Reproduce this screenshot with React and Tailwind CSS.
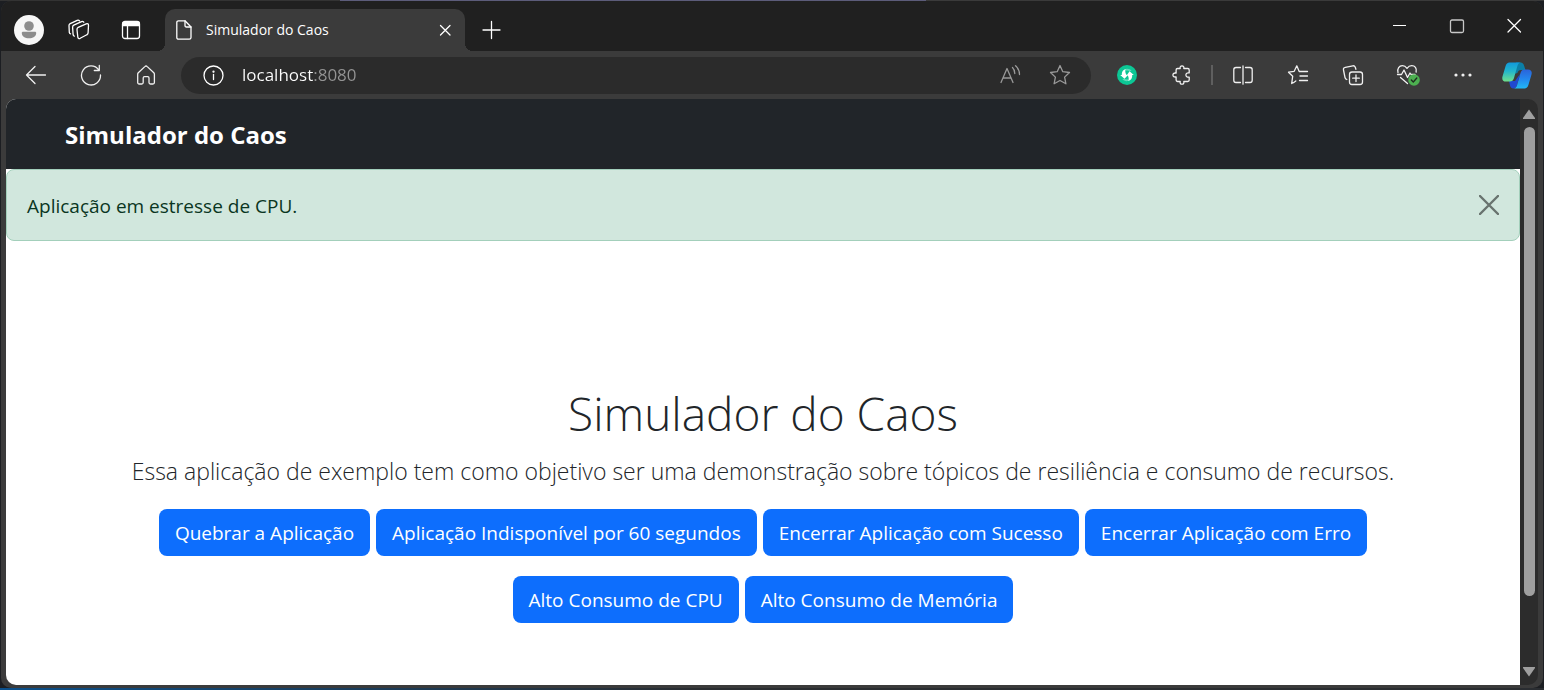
const iconProps = {
  fill: 'none',
  stroke: 'currentColor',
  strokeWidth: 1.3,
  strokeLinecap: 'round',
  strokeLinejoin: 'round',
  'aria-hidden': true,
}

function Icon({ size = 'size-5', box = 20, children }) {
  return (
    <svg viewBox={`0 0 ${box} ${box}`} className={`${size} shrink-0`} {...iconProps}>
      {children}
    </svg>
  )
}

function ToolButton({ label, children }) {
  return (
    <button aria-label={label} className="flex h-full w-[55px] shrink-0 items-center justify-center">
      {children}
    </button>
  )
}

function ProfileIcon() {
  return (
    <svg viewBox="0 0 30 30" className="size-[30px]" aria-hidden="true">
      <circle cx="15" cy="15" r="15" fill="#f7f7f7" />
      <circle cx="15" cy="11" r="4.8" fill="#8d8d8d" />
      <path d="M9.200 16.800h11.600c1 0 1.500.5 1.400 1.500-.3 3.300-3 5-7.200 5s-6.900-1.700-7.200-5c-.1-1 .4-1.500 1.400-1.500z" fill="#8d8d8d" />
    </svg>
  )
}

function CopilotIcon() {
  return (
    <svg viewBox="0 0 30 27" className="h-[27px] w-[30px]" aria-hidden="true">
      <defs>
        <linearGradient id="cp-left" x1="0" y1="0" x2="0" y2="1">
          <stop offset="0" stopColor="#1199dc" />
          <stop offset=".45" stopColor="#22b5cc" />
          <stop offset="1" stopColor="#6fe08c" />
        </linearGradient>
        <linearGradient id="cp-right" x1="0" y1="0" x2="0" y2="1">
          <stop offset="0" stopColor="#2b63d9" />
          <stop offset=".5" stopColor="#2387ee" />
          <stop offset="1" stopColor="#22b8f5" />
        </linearGradient>
      </defs>
      <path d="M14 .500h4.500c2 0 3.200 1.500 3.700 3.500l1.300 4H19c-2 0-3 1-3.600 3L12 12z" fill="#0b7fa8" />
      <path d="M7 19h6l5-7-3 11c-.6 2.300-1.600 3.500-3.500 3.500-2 0-2.900-1-3.500-3z" fill="#2048d0" />
      <path d="M7.500.500H19c-2 0-3 1.200-3.600 3.500L12 16c-.7 2.500-2 3.500-4.200 3.500H4c-3 0-4.300-2-3.500-5L3.600 4C4.300 1.700 5.500.500 7.500.500z" fill="url(#cp-left)" />
      <path d="M22.500 26.500H11.500c2 0 3-1.200 3.600-3.500L18.500 11c.7-2.500 2-3.500 4.200-3.500H26c3 0 4.300 2 3.500 5L26.400 23c-.7 2.300-1.900 3.500-3.900 3.500z" fill="url(#cp-right)" />
    </svg>
  )
}

function TitleBar() {
  return (
    <div className="flex h-[50px] items-stretch bg-[#202020] text-white">
      <button aria-label="Perfil" className="ml-[13px] flex items-center pt-2">
        <ProfileIcon />
      </button>
      <button aria-label="Workspaces" className="ml-6 flex items-center pt-2">
        <Icon size="size-[22px]" box={22}>
          <path d="M10.200 8.400 18.200 4.900c1.400-.6 2.400.1 2.300 1.500l-.4 7.400c0 .9-.5 1.600-1.300 2l-6.600 3.500c-1.200.6-2.300 0-2.400-1.300l-.8-7.300c-.1-1 .3-1.900 1.200-2.300z" />
          <path d="M6.300 17.200c-.7-.2-1.100-.7-1.200-1.500l-.5-7.500c0-.9.4-1.600 1.200-2L13.500 2.600c.9-.4 1.700-.2 2.300.6" />
          <path d="M2.500 14.800c-.7-.2-1.100-.7-1.200-1.500L1 6.600c0-.9.400-1.600 1.200-2L9.200 1.300c.9-.4 1.700-.2 2.300.6" />
        </Icon>
      </button>
      <button aria-label="Guias verticais" className="ml-[31px] flex items-center pt-2">
        <Icon>
          <rect x="1.500" y="1.500" width="17" height="17" rx="2.500" />
          <path d="M2 2.500h16V5.500H2z" fill="currentColor" />
          <path d="M6.500 6v12.500" />
        </Icon>
      </button>
      <div className="relative ml-6 mt-2 flex w-[300px] items-center rounded-t-[10px] bg-[#3b3b3b] pl-[9px] pr-3">
        {/* cantos invertidos na base da guia */}
        <span className="absolute -left-2 bottom-0 size-2 bg-[radial-gradient(circle_at_0_0,#202020_8px,#3b3b3b_8px)]" />
        <span className="absolute -right-2 bottom-0 size-2 bg-[radial-gradient(circle_at_100%_0,#202020_8px,#3b3b3b_8px)]" />
        <Icon>
          <path d="M4.500.800H11L17 7v10.500c0 1-.7 1.700-1.700 1.700H4.500c-1 0-1.700-.7-1.700-1.700v-15c0-1 .7-1.700 1.700-1.700z" />
          <path d="M11 .800v4.700C11 6.500 11.500 7 12.500 7H17" />
        </Icon>
        <span className="ml-3 text-[14px] leading-5">Simulador do Caos</span>
        <button aria-label="Fechar guia" className="ml-auto">
          <Icon size="size-4" box={16}>
            <path d="m3.500 3.500 9.500 9.500M13 3.500 3.500 13" />
          </Icon>
        </button>
      </div>
      <button aria-label="Nova guia" className="ml-4 flex items-center pt-2">
        <Icon>
          <path d="M10.500 1.500v17M2 10h17" />
        </Icon>
      </button>
      <div className="ml-auto flex pr-px">
        <button aria-label="Minimizar" className="flex w-[57px] items-center justify-center">
          <Icon><path d="M3 9.500h13" strokeWidth="1" strokeLinecap="butt" /></Icon>
        </button>
        <button aria-label="Maximizar" className="flex w-[57px] items-center justify-center">
          <Icon><rect x="3.500" y="4" width="13" height="12.500" rx="1.500" stroke="#c8c8c8" /></Icon>
        </button>
        <button aria-label="Fechar" className="flex w-[57px] items-center justify-center">
          <Icon><path d="m4 3.500 12.500 12.500M16.500 3.500 4 16" /></Icon>
        </button>
      </div>
    </div>
  )
}

function AddressBar() {
  return (
    <div className="ml-2 flex h-[37px] flex-1 items-center rounded-full bg-[#2b2b2b] pl-[22px] pr-5">
      <button aria-label="Informações do site" className="text-white">
        <Icon size="size-[21px]" box={21}>
          <circle cx="10.500" cy="10.500" r="9.500" />
          <path d="M10.500 9.500v5" />
          <circle cx="10.500" cy="6.700" r=".5" fill="currentColor" />
        </Icon>
      </button>
      {/* o degradê separa o host (branco) da porta (cinza) */}
      <input
        aria-label="Endereço"
        defaultValue="localhost:8080"
        className="ml-4 min-w-0 flex-1 bg-[linear-gradient(90deg,#fff_73px,#949494_73px)] bg-clip-text px-0.5 text-[17px] text-transparent outline-none"
      />
      <button aria-label="Ler em voz alta" className="text-[#999]">
        <Icon size="size-[22px]" box={22}>
          <path d="M2 18.500 8 4.500l6 14M4 14h8" />
          <path d="M13.500 3.500c1.500 1.500 2.300 3.500 2.300 6M16.500 1.800c2.500 2.200 4 5 4 8.700" />
        </Icon>
      </button>
      <button aria-label="Adicionar aos favoritos" className="ml-7 text-[#999]">
        <Icon size="size-[22px]" box={22}>
          <path d="m11 1.500 2.800 6.200 6.700.8-4.900 4.600 1.300 6.700-5.900-3.300-5.900 3.300 1.300-6.700-4.900-4.600 6.700-.8z" />
        </Icon>
      </button>
    </div>
  )
}

function Toolbar() {
  return (
    <div className="flex h-[48px] items-center bg-[#3b3b3b] pl-[7px] text-[#f0f0f0]">
      <ToolButton label="Voltar">
        <Icon size="size-[22px]" box={22}><path d="M20.500 11H1.500M10 2.500 1.500 11l8.500 8.500" /></Icon>
      </ToolButton>
      <ToolButton label="Atualizar">
        <Icon size="size-[22px]" box={22}>
          <path d="M18.800 6A9.500 9.500 0 1 0 20.500 11M19.300 1.500v5h-5" />
        </Icon>
      </ToolButton>
      <ToolButton label="Página inicial">
        <Icon size="size-[22px]" box={22}>
          <path d="M3.300 8.800 9.800 2.600c.8-.8 1.700-.8 2.500 0l6.500 6.200c.4.400.6.900.6 1.400v8.300c0 .9-.6 1.500-1.500 1.500h-2.400c-.9 0-1.500-.6-1.500-1.500V14c0-.8-.5-1.300-1.300-1.300H9.500c-.8 0-1.300.5-1.300 1.300v4.500c0 .9-.6 1.500-1.500 1.500H4.200c-.9 0-1.500-.6-1.500-1.500v-8.300c0-.5.200-1 .6-1.400z" />
        </Icon>
      </ToolButton>
      <AddressBar />
      <div className="ml-2 flex h-full items-center">
        <ToolButton label="Extensão">
          <svg viewBox="0 0 20 20" className="size-5" aria-hidden="true">
            <circle cx="10" cy="10" r="10" fill="#0cc795" />
            <path d="M9 4c-.8 1.300-.9 2.600-.4 4l.6 1.800h2L7.500 13.700 3.200 10h1.600C4.500 7 6 4.600 9 4z" fill="#fff" />
            <path d="M11 16c.8-1.300.9-2.600.4-4l-.6-1.800h-.9l2.600-3.900L16.800 10h-1.600c.3 3-1.200 5.400-4.200 6z" fill="#fff" />
            <path d="M9 4c2.300-.5 4.400.3 5.600 2l-2.300.3c-1-.8-2.100-1-3.300-.6zM11 16c-2.300.5-4.400-.3-5.600-2l2.300-.3c1 .8 2.100 1 3.300.6z" fill="#fff" opacity=".35" />
          </svg>
        </ToolButton>
        <ToolButton label="Extensões">
          <Icon>
            <path d="M5.500 3.500h2.700C7.800 1.700 8.600.900 10 .900s2.200.8 1.800 2.600h4c.8 0 1.400.6 1.400 1.400v3c-2-.4-3.300.5-3.300 2.100s1.300 2.500 3.300 2.100v3c0 .8-.6 1.400-1.400 1.400h-4c.4 1.800-.4 2.700-1.800 2.700s-2.200-.9-1.800-2.700H5.500c-.8 0-1.400-.6-1.400-1.400v-3.200C2.100 12.300.900 11.500.900 10s1.200-2.300 3.200-1.900V4.900c0-.8.600-1.400 1.400-1.400z" />
          </Icon>
        </ToolButton>
        <div className="mx-0.5 h-5 w-0.5 bg-[#5f5f5f]" />
        <ToolButton label="Dividir tela">
          <Icon>
            <path d="M7.500 2.500H3C1.700 2.500.800 3.400.800 4.700v10.600c0 1.300.9 2.200 2.200 2.200h4.500M12.500 2.500H17c1.300 0 2.200.9 2.200 2.200v10.600c0 1.300-.9 2.200-2.200 2.200h-4.500M10 .800v18.400" />
          </Icon>
        </ToolButton>
        <ToolButton label="Favoritos">
          <Icon size="size-[22px]" box={22}>
            <path d="M13.500 7.500h-1.300L9.800 1.800 7.200 7.300l-5.700.9 4.200 4-1 7.300c1.500-.6 3-1.600 4.100-2.500M13.500 7.500h7M13 12h7.500M12.500 16.500h8" />
          </Icon>
        </ToolButton>
        <ToolButton label="Coleções">
          <Icon size="size-[22px]" box={22}>
            <rect x="7.500" y="8" width="13" height="12.500" rx="2.500" />
            <path d="M14 11v6.500M10.700 14.200h6.600M4.800 15.500c-1-.3-1.600-1-1.800-2L1.500 6c-.3-1.400.4-2.400 1.800-2.700l7.500-1.500c1.200-.2 2 .3 2.500 1.500l.6 2" />
          </Icon>
        </ToolButton>
        <ToolButton label="Desempenho do navegador">
          <svg viewBox="0 0 24 22" className="h-[22px] w-6" {...iconProps}>
            <path d="M2 8.500C1 4.500 3.200 1.700 6.400 1.700c2 0 3.400 1 4.600 2.700 1.200-1.700 2.700-2.700 4.700-2.700 3.200 0 5.300 2.600 4.400 6.300M1.500 10.500h4l2.500-4.500 3.500 7.500 2.500-4.500 1 1.500h4M4.500 13.500l7 6" />
            <circle cx="18" cy="16" r="5.800" fill="#4caf50" stroke="none" />
            <path d="m15.300 16 2 2 3.500-4" stroke="#1f2a1f" />
          </svg>
        </ToolButton>
        <ToolButton label="Configurações e mais">
          <Icon>
            <g fill="currentColor" stroke="none">
              <circle cx="3" cy="10" r="1.600" />
              <circle cx="10" cy="10" r="1.600" />
              <circle cx="17" cy="10" r="1.600" />
            </g>
          </Icon>
        </ToolButton>
        <button aria-label="Copilot" className="flex w-[53px] items-center justify-center">
          <CopilotIcon />
        </button>
      </div>
    </div>
  )
}

const ACTIONS = [
  ['Quebrar a Aplicação', 'Aplicação Indisponível por 60 segundos', 'Encerrar Aplicação com Sucesso', 'Encerrar Aplicação com Erro'],
  ['Alto Consumo de CPU', 'Alto Consumo de Memória'],
]

function Page() {
  return (
    <div className="min-w-0 flex-1 overflow-hidden rounded-bl-[10px] rounded-tl-[10px] bg-white">
      <nav className="flex h-[70px] items-center bg-[#212529] px-[59px] pt-0.5">
        <a href="#" className="text-[24px] font-bold text-white">Simulador do Caos</a>
      </nav>
      <div role="alert" className="flex h-[72px] items-center justify-between rounded-lg border border-[#a3cfbb] bg-[#d1e7dd] px-5 text-[19px] text-[#0a3622]">
        <p className="pt-0.5">Aplicação em estresse de CPU.</p>
        <button aria-label="Fechar" className="text-[#68736e]">
          <Icon><path d="m1 1 18 18M19 1 1 19" strokeWidth="2.400" /></Icon>
        </button>
      </div>
      <main className="px-8 pt-[140px] text-center text-[#212529]">
        <h1 className="text-[46px] font-light leading-[64px]">Simulador do Caos</h1>
        <p className="mt-2 text-[23px] font-light leading-[36px]">
          Essa aplicação de exemplo tem como objetivo ser uma demonstração sobre tópicos de resiliência e consumo de recursos.
        </p>
        <div className="mt-5 flex flex-col gap-5">
          {ACTIONS.map((row) => (
            <div key={row[0]} className="flex justify-center gap-1.5">
              {row.map((label) => (
                <button key={label} className="h-[47px] whitespace-nowrap rounded-lg bg-[#0d6efd] px-4 pt-0.5 text-[19px] text-white">
                  {label}
                </button>
              ))}
            </div>
          ))}
        </div>
      </main>
    </div>
  )
}

function Scrollbar() {
  return (
    <div className="flex w-[18px] shrink-0 flex-col items-center rounded-r-[10px] bg-[#2c2c2c] pb-2 pt-2.5 text-[#9f9f9f]">
      <svg viewBox="0 0 12 10" className="h-2.5 w-3" aria-hidden="true">
        <path d="M6 .500 12 9c.2.600 0 1-.6 1H.600C0 10-.2 9.600 0 9z" fill="currentColor" />
      </svg>
      <div className="mt-2 flex min-h-0 w-full flex-1 justify-center pb-[71px]">
        <div className="w-[11px] rounded-full bg-[#9f9f9f]" />
      </div>
      <svg viewBox="0 0 12 10" className="h-2.5 w-3" aria-hidden="true">
        <path d="M6 9.500 0 1C-.2.400 0 0 .6 0h10.800c.6 0 .8.400.6 1z" fill="currentColor" />
      </svg>
    </div>
  )
}

export default function App() {
  return (
    <div className="flex h-screen flex-col bg-[#1c1e22] font-['Open_Sans','Noto_Sans',sans-serif]">
      {/* faixas da área de trabalho atrás da janela */}
      <div className="h-px bg-[linear-gradient(90deg,#333_22%,#5c5c7a_22%,#5c5c7a_60%,#3a3a3a_60%)]" />
      <div className="mx-px flex min-h-0 flex-1 flex-col overflow-hidden rounded-[10px] bg-[#3b3b3b]">
        <TitleBar />
        <Toolbar />
        <div className="flex min-h-0 flex-1 pb-[3px] pl-[5px] pr-[5px]">
          <Page />
          <Scrollbar />
        </div>
      </div>
      <div className="h-0.5 bg-[linear-gradient(90deg,#0b4f8a,#2a2d31_45%)]" />
    </div>
  )
}
